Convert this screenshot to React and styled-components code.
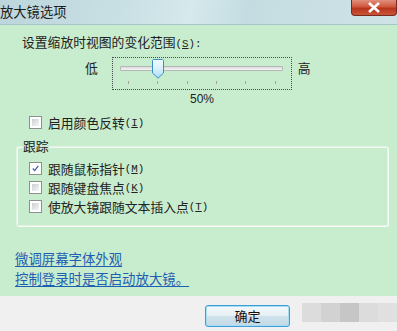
import React from 'react';
import styled, { createGlobalStyle } from 'styled-components';

const GlobalStyle = createGlobalStyle`
   html, body {
      margin: 0;
      padding: 0;
      background: #f0f0f0;
   }
   body {
      font-family: "Noto Sans CJK SC", "Liberation Sans", sans-serif;
   }
`;

const WindowStyled = styled.div`
   width: 397px;
   height: 331px;
   display: flex;
   flex-direction: column;
   overflow: hidden;
   color: #222;
`;

const TitleBar = styled.div`
   height: 24px;
   flex: none;
   display: flex;
   align-items: flex-start;
   justify-content: space-between;
   border-bottom: 1px solid #a8c4c8;
   background: linear-gradient(
      100deg,
      #bcd6dc 0%,
      #c8dfe3 30%,
      #d6e9ec 48%,
      #c4dce1 62%,
      #cfe3e6 100%
   );

   .title__text {
      font-size: 13.3px;
      line-height: 24px;
      color: #1c1c1c;
   }
`;

const CloseButton = styled.div`
   width: 46px;
   height: 16px;
   box-sizing: border-box;
   border: 1px solid #7a2a1c;
   border-top: none;
   border-radius: 0 0 4px 4px;
   background: linear-gradient(#e0907d 0%, #d0573d 45%, #b8341c 55%, #c85638 100%);
   display: flex;
   align-items: center;
   justify-content: center;
`;

const Body = styled.div`
   flex: 1;
   background: #c8ecce;
   display: flex;
   flex-direction: column;
   padding: 9px 9px 0 15px;
   font-size: 12.8px;
`;

const Label = styled.div`
   line-height: 16px;
   height: 16px;
   padding-left: ${(p) => p.$indent || 0}px;
   white-space: nowrap;
`;

// mnemonic part, e.g. "(S)", drawn with half-width ascii like the original
const Key = styled.span`
   font-family: "Liberation Mono", monospace;
   font-size: 10.8px;

   u {
      text-underline-offset: 1px;
   }
`;

const SliderRow = styled.div`
   display: flex;
   align-items: flex-start;
   margin-top: 7px;
   padding-left: 70px;

   .slider__end {
      line-height: 16px;
      margin-top: 3px;
   }
`;

const SliderBox = styled.div`
   position: relative;
   width: 180px;
   height: 33px;
   box-sizing: border-box;
   border: 1px dotted #4a4a4a;
   margin: 0 6px 0 14px;
`;

const Track = styled.div`
   margin: 8px 8px 0 7px;
   height: 5px;
   box-sizing: border-box;
   border: 1px solid #b6b6b6;
   border-radius: 1px;
   background: linear-gradient(#dcdcdc, #f4f4f4);
`;

const Ticks = styled.div`
   display: flex;
   justify-content: space-between;
   margin: 10px 15px 0 15px;

   span {
      width: 1px;
      height: 3px;
      background: #a0a6a0;
   }
`;

const Thumb = styled.svg`
   position: absolute;
   top: 1px;
`;

const Percent = styled.div`
   text-align: center;
   line-height: 14px;
   margin-top: 2px;
   font-family: "Liberation Sans", "Noto Sans CJK SC", sans-serif;
   font-size: 12px;
   width: 374px;
`;

const CheckRow = styled.div`
   display: flex;
   align-items: center;
   height: 19px;
   padding-left: 14px;
   margin-top: ${(p) => p.$top || 0}px;
   white-space: nowrap;
`;

const CheckBox = styled.div`
   width: 13px;
   height: 13px;
   box-sizing: border-box;
   border: 1px solid #8e8f8f;
   background: #fff;
   margin-right: 6px;
   padding: 2px;
   display: flex;
   align-items: center;
   justify-content: center;

   &::before {
      content: '';
      display: ${(p) => (p.$checked ? 'none' : 'block')};
      width: 100%;
      height: 100%;
      background: linear-gradient(135deg, #cbcfd5, #f6f6f6);
   }
`;

const GroupBox = styled.fieldset`
   margin: 6px 0 0 1px;
   padding: 5px 0 6px 0;
   width: 372px;
   box-sizing: border-box;
   height: 88px;
   border: 1px solid #e4f2e6;
   box-shadow: 1px 1px 0 #f6fbf6, inset 1px 1px 0 #f2f9f3;
   border-radius: 2px;

   legend {
      padding: 0 1px;
      margin-left: 5px;
      line-height: 16px;
      font-size: 12.8px;
   }

   ${CheckRow} {
      padding-left: 12px;
   }
`;

const LinkList = styled.div`
   display: flex;
   flex-direction: column;
   gap: 4px;
   margin-top: 24px;

   a {
      font-size: 13.4px;
      line-height: 16px;
      color: #1f5fb2;
      text-decoration: underline;
      text-underline-offset: 2px;
      white-space: nowrap;
   }
`;

const Footer = styled.div`
   height: 35px;
   flex: none;
   background: #f0f0f0;
   display: flex;
   align-items: flex-start;
   padding-left: 205px;
`;

const OkButton = styled.button`
   margin-top: 9px;
   width: 87px;
   height: 22px;
   box-sizing: border-box;
   border: 1px solid #3c9fd8;
   border-radius: 3px;
   background: linear-gradient(#f4f8fa 0%, #e6f0f5 48%, #cfe2ec 52%, #c2d9e6 100%);
   box-shadow: inset 0 0 0 1px #a6dcf4;
   font-family: "Noto Sans CJK SC", sans-serif;
   font-size: 13px;
   color: #111;
   padding: 0;
   line-height: 18px;
`;

const Smudge = styled.div`
   display: flex;
   margin-top: 7px;
   margin-left: 12px;
`;

const Block = styled.span`
   width: 19px;
   height: 19px;
   background: ${(p) => p.$color};
`;

function Check({ checked }) {
   return (
      <CheckBox $checked={checked}>
         {checked && (
            <svg width='9' height='9' viewBox='0 0 9 9'>
               <path
                  d='M1 4.5 L3.5 7.2 L8 1'
                  fill='none'
                  stroke='#3d5ba8'
                  strokeWidth='1.6'
               />
            </svg>
         )}
      </CheckBox>
   );
}

function Mnemonic({ letter, colon }) {
   return (
      <Key>
         (<u>{letter}</u>){colon ? ':' : ''}
      </Key>
   );
}

export default function App() {
   const ticks = [0, 1, 2, 3, 4, 5];
   const thumbLeft = 39;

   return (
      <WindowStyled>
         <GlobalStyle />
         <TitleBar>
            <span className='title__text'>放大镜选项</span>
            <CloseButton>
               <svg width='14' height='11' viewBox='0 0 14 11'>
                  <path
                     d='M2 1 L12 10 M12 1 L2 10'
                     stroke='#fff'
                     strokeWidth='2.6'
                  />
               </svg>
            </CloseButton>
         </TitleBar>
         <Body>
            <Label $indent={7}>
               设置缩放时视图的变化范围
               <Mnemonic letter='S' colon />
            </Label>
            <SliderRow>
               <span className='slider__end'>低</span>
               <SliderBox>
                  <Track />
                  <Ticks>
                     {ticks.map((t) => (
                        <span key={t} />
                     ))}
                  </Ticks>
                  <Thumb
                     width='12'
                     height='20'
                     viewBox='0 0 12 20'
                     style={{ left: thumbLeft }}
                  >
                     <defs>
                        <linearGradient id='thumbFill' x1='0' y1='0' x2='0' y2='1'>
                           <stop offset='0' stopColor='#f2fbff' />
                           <stop offset='0.5' stopColor='#d6f0fc' />
                           <stop offset='1' stopColor='#a9dcf6' />
                        </linearGradient>
                     </defs>
                     <path
                        d='M1.5 0.5 H10.5 Q11.5 0.5 11.5 1.5 V14 L6 19.2 L0.5 14 V1.5 Q0.5 0.5 1.5 0.5 Z'
                        fill='url(#thumbFill)'
                        stroke='#3c8fc4'
                     />
                  </Thumb>
               </SliderBox>
               <span className='slider__end'>高</span>
            </SliderRow>
            <Percent>50%</Percent>
            <CheckRow $top={7}>
               <Check />
               启用颜色反转
               <Mnemonic letter='I' />
            </CheckRow>
            <GroupBox>
               <legend>跟踪</legend>
               <CheckRow>
                  <Check checked />
                  跟随鼠标指针
                  <Mnemonic letter='M' />
               </CheckRow>
               <CheckRow>
                  <Check />
                  跟随键盘焦点
                  <Mnemonic letter='K' />
               </CheckRow>
               <CheckRow>
                  <Check />
                  使放大镜跟随文本插入点
                  <Mnemonic letter='T' />
               </CheckRow>
            </GroupBox>
            <LinkList>
               <a href='#fonts'>微调屏幕字体外观</a>
               <a href='#logon'>控制登录时是否启动放大镜。</a>
            </LinkList>
         </Body>
         <Footer>
            <OkButton>确定</OkButton>
            <Smudge>
               <Block $color='#dcdcdc' />
               <Block $color='#d2d2d2' />
               <Block $color='#c6c6c6' />
               <Block $color='#dcdcdc' />
               <Block $color='#e0e0e0' />
            </Smudge>
         </Footer>
      </WindowStyled>
   );
}
